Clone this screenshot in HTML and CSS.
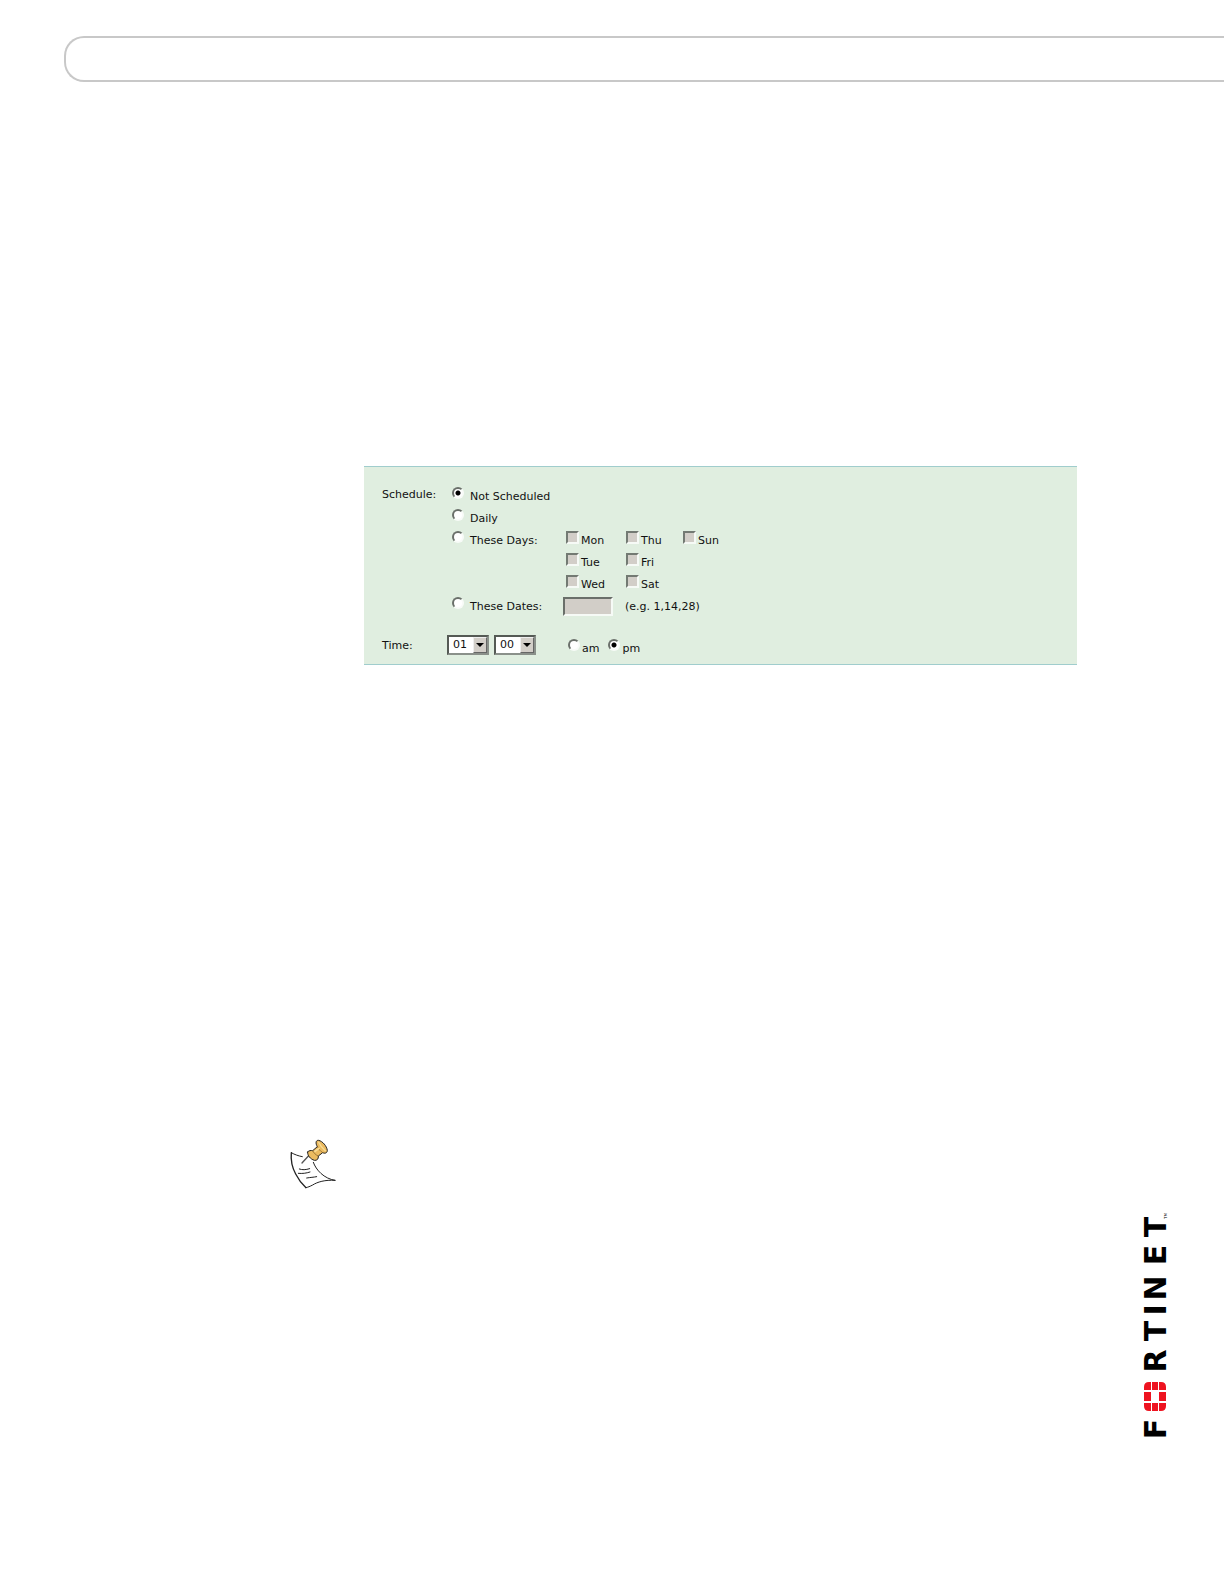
FILE: index.html
```html
<!DOCTYPE html>
<html lang="en">
<head>
    <meta charset="utf-8">
    <title>Schedule</title>
    <link rel="stylesheet" href="styles.css">
</head>
<body>
    <header class="page-header"></header>

    <main>
        <form class="panel">
            <div class="row">
                <span class="row-title">Schedule:</span>
                <div class="options">
                    <div class="option"><input type="radio" name="schedule" id="none" checked><label for="none">Not Scheduled</label></div>
                    <div class="option"><input type="radio" name="schedule" id="daily"><label for="daily">Daily</label></div>
                    <div class="option"><input type="radio" name="schedule" id="days"><label for="days">These Days:</label></div>
                    <div class="days">
                        <div class="day"><input type="checkbox" id="mon" disabled><label for="mon">Mon</label></div>
                        <div class="day"><input type="checkbox" id="thu" disabled><label for="thu">Thu</label></div>
                        <div class="day"><input type="checkbox" id="sun" disabled><label for="sun">Sun</label></div>
                        <div class="day"><input type="checkbox" id="tue" disabled><label for="tue">Tue</label></div>
                        <div class="day"><input type="checkbox" id="fri" disabled><label for="fri">Fri</label></div>
                        <div class="day"></div>
                        <div class="day"><input type="checkbox" id="wed" disabled><label for="wed">Wed</label></div>
                        <div class="day"><input type="checkbox" id="sat" disabled><label for="sat">Sat</label></div>
                    </div>
                    <div class="option"><input type="radio" name="schedule" id="dates"><label for="dates">These Dates:</label></div>
                    <div class="dates">
                        <input type="text" class="dates-input" id="dates-list" disabled>
                        <label for="dates-list">(e.g. 1,14,28)</label>
                    </div>
                </div>
            </div>

            <div class="row time-row">
                <span class="row-title">Time:</span>
                <div class="time">
                    <div class="select-box">
                        <select aria-label="Hour"><option>01</option></select>
                        <span class="arrow"><svg width="8" height="4" viewBox="0 0 8 4"><path d="M0 0h8L4 4z"/></svg></span>
                    </div>
                    <div class="select-box">
                        <select aria-label="Minute"><option>00</option></select>
                        <span class="arrow"><svg width="8" height="4" viewBox="0 0 8 4"><path d="M0 0h8L4 4z"/></svg></span>
                    </div>
                    <div class="half-day">
                        <div class="half"><input type="radio" name="half" id="am"><label for="am">am</label></div>
                        <div class="half"><input type="radio" name="half" id="pm" checked><label for="pm">pm</label></div>
                    </div>
                </div>
            </div>
        </form>

        <!-- note pinned with a thumbtack -->
        <svg class="note-icon" viewBox="0 0 210 210" fill="none" stroke="#222" stroke-linecap="round" stroke-linejoin="round">
            <path d="M34 68C32 90 36 112 47 132C57 152 68 164 78 173" stroke-width="4"/>
            <path d="M34 68C44 74 56 78 67 80M100 97C108 120 132 146 165 151" stroke-width="3"/>
            <path d="M165 151C135 149 112 156 98 165C90 169 84 172 77 173" stroke-width="3"/>
            <path d="M58 117C68 120 76 120 89 116M55 130C68 131 78 130 90 126M80 144C92 142 100 142 110 140" stroke-width="3"/>
            <path d="M66 99L88 75" stroke="#555" stroke-width="4"/>
            <path d="M83 66C87 61 93 61 98 62L112 50C106 40 107 30 116 31C128 34 140 48 142 61C142 70 134 71 128 68L115 78C116 87 111 92 103 91C91 87 82 77 83 66Z" fill="#ecbb60" stroke-width="3"/>
            <path d="M98 62C101 69 107 75 115 78M112 50C116 57 121 64 128 68" stroke="#7a5720" stroke-width="2"/>
            <path d="M105 64L117 55" stroke="#f8dc96" stroke-width="5"/>
            <path d="M116 37C121 48 128 56 136 62" stroke="#f8dc96" stroke-width="4"/>
        </svg>

        <!-- logo runs from bottom to top -->
        <svg class="logo" viewBox="0 0 28 236" role="img" aria-label="Fortinet">
            <g transform="translate(24 236) rotate(-90)">
                <text class="logo-text" x="14 82 112 133 155 188 216" y="0">FRTINET</text>
                <text class="logo-mark" x="224" y="1">TM</text>
                <g fill="#ee1320">
                    <path d="M32 -7h8v7h-3q-5 0-5-5zM42 -7h9v7h-9zM53 -7h8v2q0 5-5 5h-3z"/>
                    <path d="M32 -14h8v6h-8zM53 -14h8v6h-8z"/>
                    <path d="M32 -15h8v-7h-3q-5 0-5 5zM42 -15h9v-7h-9zM53 -15h8v-2q0-5-5-5h-3z"/>
                </g>
            </g>
        </svg>
    </main>
</body>
</html>
```
FILE: styles.css
```css
* { margin: 0; padding: 0; box-sizing: border-box; }
body {
    background: white; color: #111;
    font-family: "DejaVu Sans", Verdana, sans-serif; font-size: 11px; line-height: 14px;
}
.page-header {
    height: 46px; margin: 36px 0 0 64px;
    border: 2px solid #c8c8c8; border-right: none; border-radius: 20px 0 0 20px;
}
main { display: flex; flex-direction: column; padding: 384px 56px 0 288px; }

.panel {
    margin: 0 91px 0 76px; padding: 20px 18px 8px;
    background: #e0eee0; border-top: 1px solid #a0cdcd; border-bottom: 1px solid #a0cdcd;
}
.row { display: flex; }
.row-title { width: 65px; padding-top: 1px; }
.options { flex: 1; display: grid; grid-template-columns: 116px 1fr; grid-auto-rows: minmax(22px, auto); }
.option { grid-column: 1; display: flex; gap: 6px; height: 22px; padding-left: 5px; }
.option label, .half label, .day label { padding-top: 3px; }
.days { grid-column: 2; display: grid; grid-template-columns: 60px 57px 60px; grid-auto-rows: 22px; padding-left: 3px; }
.day { display: flex; gap: 2px; }
.dates { display: flex; gap: 12px; height: 22px; }

input[type="radio"] {
    appearance: none; width: 12px; height: 12px;
    border: 2px solid; border-color: #6a6f6a #f8fbf8 #f8fbf8 #6a6f6a; border-radius: 50%;
    background: white;
}
input[type="radio"]:checked { background: radial-gradient(circle, #000 2px, white 3px); }
input[type="checkbox"] {
    appearance: none; width: 13px; height: 13px;
    border: 2px solid; border-color: #737a73 #f6faf6 #f6faf6 #737a73; background: #d2cec8;
}
.dates-input {
    width: 50px; height: 19px;
    border: 2px solid; border-color: #6a6f6a #f6faf6 #f6faf6 #6a6f6a; background: #d2cec8;
}
.dates label { padding-top: 3px; }

.time-row { margin-top: 16px; }
.time-row .row-title { padding-top: 4px; }
.time { display: flex; gap: 5px; }
.select-box { position: relative; width: 42px; height: 20px; }
select {
    appearance: none; width: 100%; height: 100%; padding-left: 4px;
    border: 2px solid; border-color: #555a55 #8a908a #8a908a #555a55; border-radius: 0;
    background: white; color: #111; font: inherit;
}
.arrow {
    position: absolute; top: 2px; right: 2px; width: 14px; height: 16px;
    display: flex; align-items: center; justify-content: center;
    background: #d2cec8; border: 1px solid; border-color: #eee #666 #666 #eee;
    pointer-events: none;
}
.half-day { display: flex; gap: 9px; padding: 4px 0 0 27px; }
.half { display: flex; gap: 2px; }

.note-icon { width: 70px; height: 70px; margin: 465px 0 0 -8px; }
.logo { align-self: flex-end; width: 28px; height: 236px; margin: 7px -2px 0 0; overflow: visible; }
.logo-text { font: bold 30px "DejaVu Sans", sans-serif; text-anchor: middle; fill: #000; }
.logo-mark { font: 4px "DejaVu Sans", sans-serif; fill: #000; }
```
